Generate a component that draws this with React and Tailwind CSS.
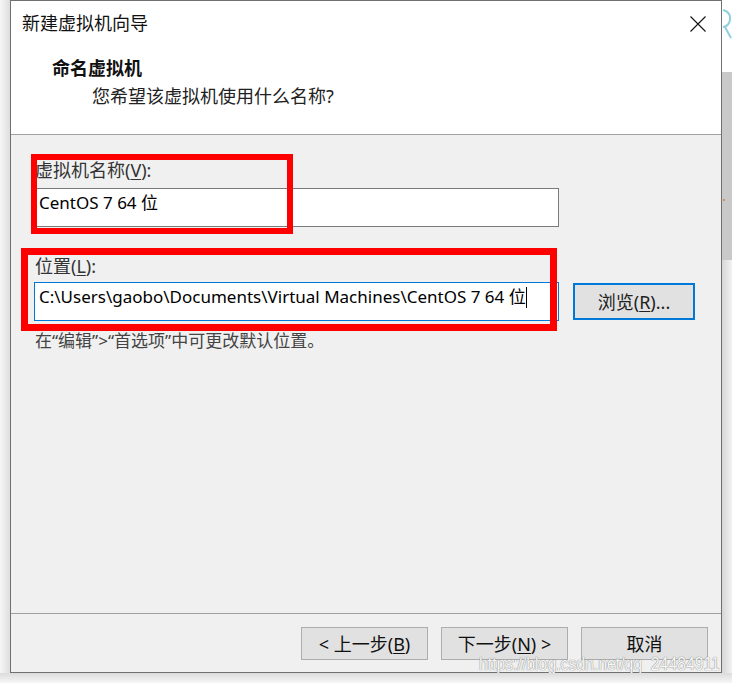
import React from "react";

const FONT = "font-['Noto_Sans','Noto_Sans_CJK_SC',sans-serif]";

function CloseIcon() {
	return (
		<svg width="16" height="16" viewBox="0 0 16 16" className="block">
			<path d="M0.5 0.5 L15.5 15.5 M15.5 0.5 L0.5 15.5" stroke="#111" strokeWidth="1.1" fill="none" />
		</svg>
	);
}

function Key({ children }) {
	return <span className="underline underline-offset-2 decoration-1">{children}</span>;
}

function FooterButton({ children }) {
	return (
		<button className="w-[127px] h-[33px] bg-[#e1e1e1] border border-[#adadad] text-[18px] leading-[20px] text-[#111] flex items-center justify-center">
			{children}
		</button>
	);
}

export default function App() {
	return (
		<div className={`relative w-[732px] h-[683px] overflow-hidden bg-[#f2f2f2] flex flex-col ${FONT}`}>
			<div className="flex h-[673px]">
				{/* ombre gauche */}
				<div className="w-[10px] bg-gradient-to-r from-[#f7f7f7] to-[#dedede]" />

				{/* fenêtre de l'assistant */}
				<div className="w-[712px] h-full border border-[#707070] flex flex-col bg-[#f0f0f0]">
					<div className="h-[134px] bg-white border-b border-[#a0a0a0] pt-[10px]">
						<div className="flex justify-between items-start pl-[11px] pr-[15px]">
							<span className="text-[18px] leading-[24px] text-[#111]">新建虚拟机向导</span>
							<span className="mt-[5px]">
								<CloseIcon />
							</span>
						</div>
						<div className="pl-[41px] mt-[21px] text-[18px] leading-[24px] font-bold text-[#111]">
							命名虚拟机
						</div>
						<div className="pl-[81px] mt-[4px] text-[18px] leading-[24px] text-[#222]">
							您希望该虚拟机使用什么名称?
						</div>
					</div>

					<div className="flex-1 pt-[23px] pl-[23px]">
						<div className="pl-[1px] text-[18px] leading-[24px] text-[#333]">
							虚拟机名称(<Key>V</Key>):
						</div>
						<div className="mt-[6px] w-[525px] h-[39px] bg-white border border-[#7a7a7a] pl-[4px] pt-[2px] text-[17px] leading-[24px] text-black">
							CentOS 7 64 位
						</div>

						<div className="mt-[27px] pl-[1px] text-[18px] leading-[24px] text-[#333]">
							位置(<Key>L</Key>):
						</div>
						<div className="mt-[4px] flex items-center gap-[14px]">
							<div className="w-[525px] h-[39px] bg-white border border-[#0078d7] pl-[4px] pt-[2px] text-[17px] leading-[24px] text-black flex items-start">
								<span>C:\Users\gaobo\Documents\Virtual Machines\CentOS 7 64 位</span>
								<span className="w-[1px] h-[21px] bg-black mt-[2px]" />
							</div>
							<button className="w-[122px] h-[37px] bg-[#e1e1e1] border-2 border-[#0078d7] text-[18px] leading-[24px] text-[#222] flex items-center justify-center">
								浏览(<Key>R</Key>)...
							</button>
						</div>
						<div className="mt-[8px] pl-[1px] text-[17px] leading-[24px] text-[#444]">
							在“编辑”&gt;“首选项”中可更改默认位置。
						</div>
					</div>

					<div className="h-[59px] border-t border-[#a0a0a0] flex justify-end gap-[13px] pt-[13px] pr-[13px]">
						<FooterButton>
							&lt; 上一步(<Key>B</Key>)
						</FooterButton>
						<FooterButton>
							下一步(<Key>N</Key>) &gt;
						</FooterButton>
						<FooterButton>取消</FooterButton>
					</div>
				</div>

				{/* bande droite (fenêtre en arrière-plan) */}
				<div className="w-[10px] flex flex-col">
					<div className="h-[72px] bg-white relative overflow-hidden">
						<svg width="10" height="40" viewBox="0 0 10 40" className="absolute left-0 top-[8px]">
							<path d="M1 2 Q9 4 8 12 Q7 18 1 19 M3 19 L9 30" stroke="#8fd0de" strokeWidth="2" fill="none" />
						</svg>
					</div>
					<div className="h-[188px] bg-[#c9c9c9] relative">
						<span className="absolute left-[1px] top-[127px] w-[2px] h-[2px] bg-[#c89a4a]" />
					</div>
					<div className="flex-1 bg-gradient-to-r from-[#d6d6d6] to-[#f3f3f3]" />
				</div>
			</div>

			{/* ombre basse */}
			<div className="flex-1 bg-gradient-to-b from-[#dcdcdc] to-[#f6f6f6]" />

			{/* annotations rouges */}
			<div className="absolute left-[31px] top-[154px] w-[262px] h-[80px] border-[6px] border-[#ff0000]" />
			<div className="absolute left-[21px] top-[248px] w-[536px] h-[83px] border-[7px] border-[#ff0000]" />

			{/* filigrane */}
			<div className="absolute left-[479px] top-[654px] w-[242px] overflow-hidden h-[19px]">
				<div className="origin-left scale-x-[0.83] whitespace-nowrap font-['Liberation_Sans',sans-serif] text-[19px] leading-[19px] text-[#f6f6f6] [text-shadow:0_0_1px_#8a8a8a,0_0_1px_#8a8a8a]">
					https://blog.csdn.net/qq_24484911
				</div>
			</div>
		</div>
	);
}
